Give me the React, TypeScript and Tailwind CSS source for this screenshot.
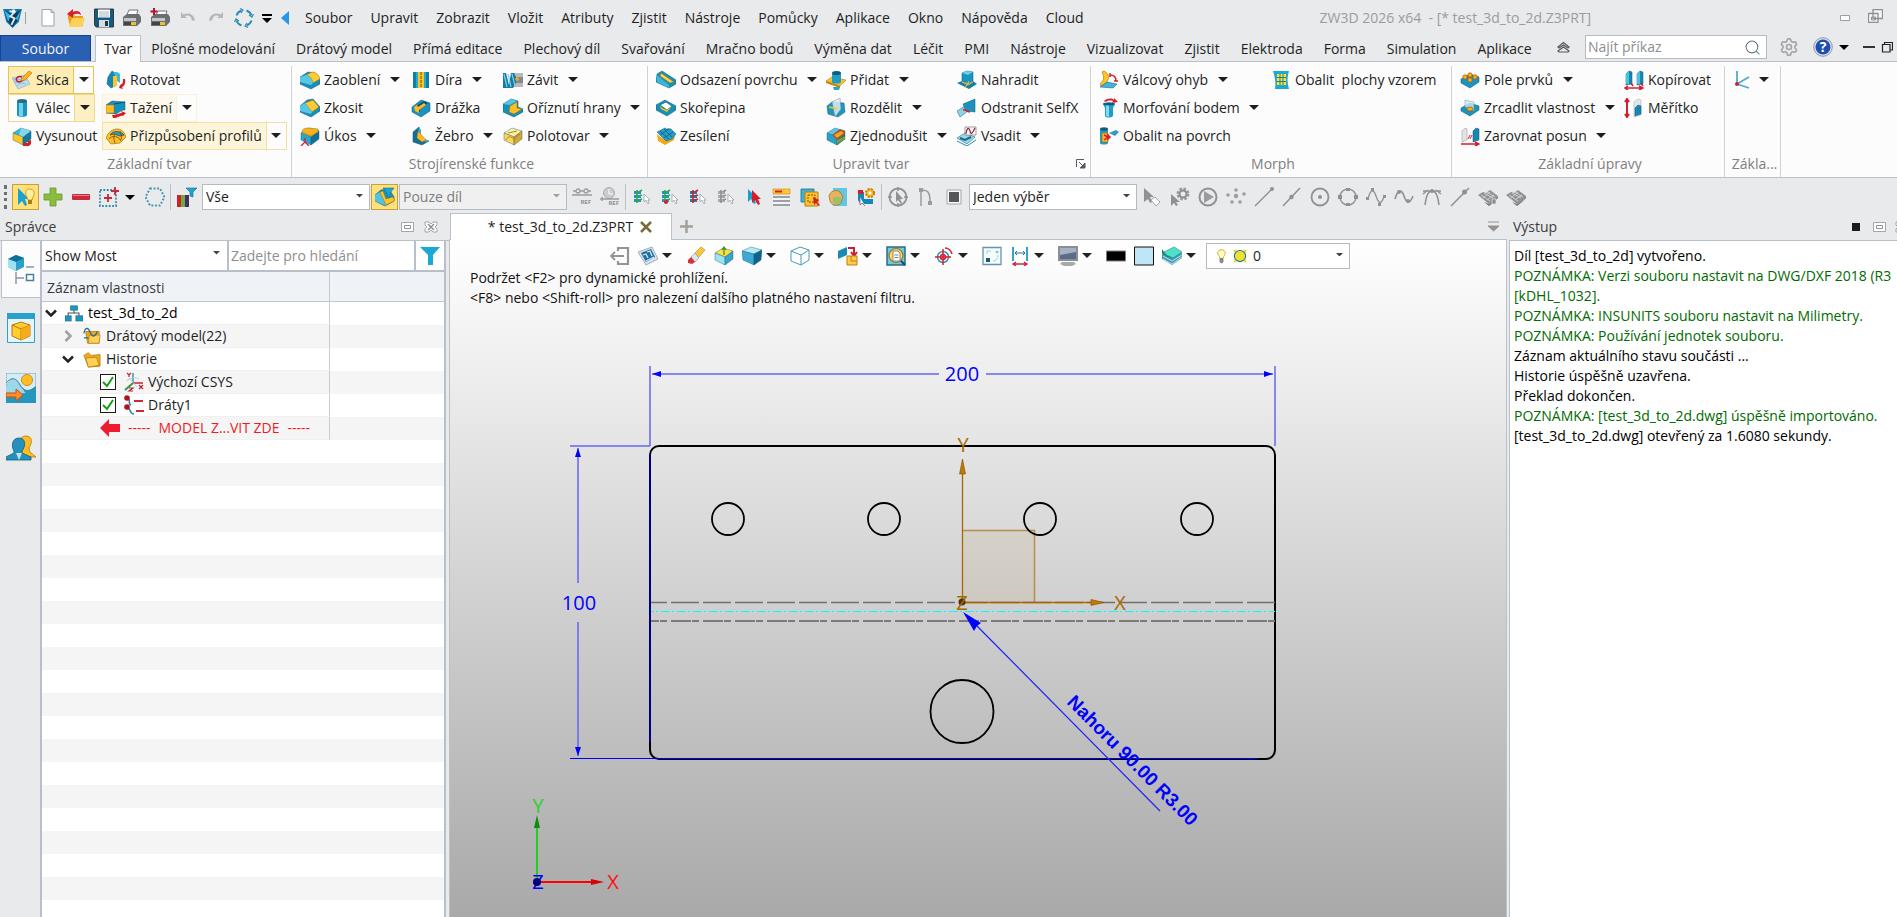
import React from "react";
import { Settings } from "lucide-react";

const Box = ({ t = "#7fdcf2", l = "#22a3cc", r = "#0b6488" }: { t?: string; l?: string; r?: string }) => (
  <g strokeLinejoin="round" stroke="#0a5a78" strokeWidth=".4">
    <path d="M1 7 9 2l10 3-8 6z" fill={t} />
    <path d="M1 7l10 4v8L1 14z" fill={l} />
    <path d="M11 11l8-6v8l-8 6z" fill={r} />
  </g>
);

const Surface = () => (
  <>
    <path d="M0 8l5-3 3 1 4-3 8 6-3 4-6 4z" fill="#8f9295" />
    <path d="M3 8l9 6M6 6l9 5M9 5l8 5M5 11l7-6M9 13l7-5" stroke="#d5d6d8" strokeWidth=".9" />
    <path d="M11 17l6-4 3-4v2l-4 4-5 4-5-4z" fill="#717477" />
  </>
);

const List4 = ({ c, d }: { c: string; d: string }) => (
  <>
    <path d="M2 4h7v3H2zM2 8h7v3H2zM2 12h7v3H2z" fill={c} />
    <path d="M5 3v13M7 5l3-2M7 9l3-1M7 13l3-1" stroke={d} strokeWidth="1.600" />
    <path d="M12 7v8l2-2 2 4 1-1-1-3h2z" fill="#fff" stroke="#8b98a6" strokeWidth=".7" />
  </>
);

const icons: Record<string, React.ReactNode> = {
  logo: (
    <>
      <path d="M1 1h18l-3 12-6 6-6-6z" fill="#1479a8" />
      <path d="M2 2l8 4 8-4-3 10-5 6-5-6z" fill="#0d3d5c" />
      <path d="M2 2l6 5-2 6zM18 2l-5 8 2 2z" fill="#35b9ec" />
      <path d="M7 3l5 1-4 4 4 2-3 6" fill="none" stroke="#dcebf2" strokeWidth="1.800" />
      <circle cx="11" cy="3" r="1.800" fill="#e9f1f5" />
    </>
  ),
  newFile: <path d="M4 1.500h9l3 3V18H4zM13 1.500v3h3" fill="#fff" stroke="#9aa2ad" />,
  open: (
    <>
      <path d="M2 10V6h5l2 2h8v10H4z" fill="#eb9d14" />
      <path d="M6 10h13l-3 9H3z" fill="#ffd257" />
      <path d="M15 7c0-4-5-5-8-3V1L1 6l6 4V7c3-2 6-1 8 0z" fill="#d6202b" />
    </>
  ),
  save: (
    <>
      <path d="M0.500 1h19v18H2l-1.500-2z" fill="#175a7e" stroke="#222" strokeWidth=".8" />
      <path d="M4 1.500h12v8H4z" fill="#fff" />
      <path d="M5 4h10M5 6h10M5 8h10" stroke="#8ca2af" strokeWidth=".8" />
      <path d="M5 12h10v7H5z" fill="#d7dde1" />
      <path d="M11 13h3v5h-3z" fill="#0f3b57" />
    </>
  ),
  print: (
    <>
      <path d="M7 2h9l-2 7H4z" fill="#fff" stroke="#777" />
      <path d="M1 9l4-3h12l2 3v5l-4 4H1z" fill="#6c6f72" />
      <path d="M2 10h12v3H2z" fill="#c3c6c8" />
      <path d="M2 14h12v3H2z" fill="#444" />
      <path d="M9 14h5v3H9z" fill="#e3c42c" />
    </>
  ),
  printPlus: (
    <>
      <path d="M8 3h9l-2 6H5z" fill="#fff" stroke="#777" />
      <path d="M1 9l4-3h13l2 3v5l-4 4H1z" fill="#6c6f72" />
      <path d="M2 10h13v3H2z" fill="#c3c6c8" />
      <path d="M2 14h13v3H2z" fill="#444" />
      <path d="M10 14h5v3h-5z" fill="#e3c42c" />
      <path d="M4 0v7M.5 3.500h7" stroke="#b3142c" strokeWidth="2" />
    </>
  ),
  undo: <path d="M3 4v6h6L7 8.500c3-2 6-1 7 4h3C16 6 10 4 5.500 6.500z" fill="#b4b6b9" />,
  redo: <path d="M17 4v6h-6l2-1.500c-3-2-6-1-7 4H3C4 6 10 4 14.500 6.500z" fill="#b4b6b9" />,
  sync: (
    <g fill="none" stroke="#2d8fb5" strokeWidth="2">
      <path d="M2.500 7.500a8 8 0 0 1 5-5M12.500 2.500a8 8 0 0 1 5 5M17.500 12.500a8 8 0 0 1-5 5M7.500 17.500a8 8 0 0 1-5-5" />
      <path d="M6 0.500l3 1.500-2 3M19.500 6l-1.500 3-3-2M14 19.500l-3-1.500 2-3M0.500 14l1.500-3 3 2" strokeWidth="1.200" />
    </g>
  ),
  sketch: (
    <>
      <path d="M0 8l13-3 5 9-12 5z" fill="#bddcec" stroke="#86a9bc" strokeWidth=".6" />
      <path d="M2 12l12 2M5 16l8-9M1 9l14 1" stroke="#7fb2ca" strokeWidth=".7" />
      <path d="M10 7c-4-2-7 2-5 4s6 0 7-3" fill="none" stroke="#c02030" strokeWidth="1.500" />
      <path d="M10 8l7-7 3 2-7 7-4 1z" fill="#ffb21e" stroke="#b96d00" strokeWidth=".6" />
    </>
  ),
  cylinder: (
    <>
      <path d="M5 3v14c0 2.500 10 2.500 10 0V3z" fill="#1a93bd" />
      <path d="M7 3v15c2 .6 3 .6 4 .5V3z" fill="#6fd3ec" />
      <ellipse cx="10" cy="3" rx="5" ry="2" fill="#2b6b85" />
    </>
  ),
  extrude: (
    <>
      <Box t="#35b8de" l="#ffc526" r="#117aa3" />
      <path d="M9 2l10 3-8 6-4-2z" fill="#d8f3fa" opacity=".5" />
      <path d="M11 17h5l-1-2 4-1v4l-2 2h-6z" fill="#d61e2b" />
    </>
  ),
  revolve: (
    <>
      <path d="M2 7l4-6 3 2v13l-4 2-4-4z" fill="#1488b2" stroke="#0a5a78" strokeWidth=".5" />
      <path d="M7 3c2-2 6-1 7 1v9l-3-2V7z" fill="#39bade" />
      <path d="M7 6h4v10l-4 1z" fill="#ffc526" />
      <path d="M14 15c3-1 3-3 3-6h2c1 4-1 8-3 8l1 2-4-1z" fill="#d61e2b" />
    </>
  ),
  sweep: (
    <>
      <path d="M0 7l6-4 13 1v8c-4 0-5 2-9 4L0 15z" fill="#1591bc" stroke="#0a5a78" strokeWidth=".5" />
      <path d="M0 7h8v8H0z" fill="#ffbe22" stroke="#a56a00" strokeWidth=".5" />
      <path d="M8 6l11-2" stroke="#084e6b" />
      <path d="M6 17c5 0 7-2 10-2l-1-2 5 2-3 3c-3-1-6 3-10 2z" fill="#d61e2b" />
    </>
  ),
  loft: (
    <>
      <path d="M0 12C2 6 7 3 11 3s7 2 9 8l-6 6-9 1z" fill="#ffbe22" stroke="#8c6410" strokeWidth=".6" />
      <path d="M4 9c4-6 12-3 14 0l-4 1-6-2z" fill="#3b98b5" stroke="#2a4753" strokeWidth=".7" />
      <path d="M3 13c3-4 10-3 12 2M9 8c-2 3-1 6 0 9M14 5c1 4 2 6 1 9" fill="none" stroke="#6d4e0b" strokeWidth=".8" />
    </>
  ),
  fillet: (
    <>
      <path d="M0 7l8-5 7 1 5 6v5l-9 5L0 14z" fill="#178fb9" stroke="#0a5a78" strokeWidth=".5" />
      <path d="M6 5l6-3c4 0 7 3 8 7l-7 4c-1-4-3-7-7-8z" fill="#ffc930" stroke="#9d6d05" strokeWidth=".5" />
      <path d="M0 7l6-2c4 1 6 4 7 8l-2 2L0 12z" fill="#57c7e6" />
    </>
  ),
  chamfer: (
    <>
      <path d="M0 8l7-6 6-1 7 8v4l-9 6L0 14z" fill="#178fb9" stroke="#0a5a78" strokeWidth=".5" />
      <path d="M5 5l8-3 6 7-7 5z" fill="#ffc930" stroke="#9d6d05" strokeWidth=".5" />
      <path d="M0 8l5-3 7 9-1 2-11-3z" fill="#57c7e6" />
    </>
  ),
  draft: (
    <>
      <Box t="#ffc930" l="#2aa7cf" r="#107099" />
      <path d="M2 6c0-3 3-4 7-4l9 1v3l-7 4z" fill="#f7b21d" stroke="#9d6d05" strokeWidth=".5" />
      <path d="M5 12v4l-4 4M5 16l4 4" stroke="#d61e2b" strokeWidth="1.300" fill="none" />
    </>
  ),
  hole: (
    <>
      <path d="M2 2h16v16H2z" fill="#24a9d0" />
      <path d="M2 2h3v16H2zM15 2h3v16h-3z" fill="#0f7fa8" />
      <path d="M7 2h6v16H7z" fill="#ffc526" />
      <path d="M10 2v16" stroke="#5b4c1a" strokeDasharray="3 1" />
    </>
  ),
  slot: (
    <>
      <path d="M1 9l9-7 9 3v8l-9 6-9-5z" fill="#1992bd" stroke="#0a5a78" strokeWidth=".5" />
      <path d="M4 9l9-6 4 2-8 6v3l-4-2z" fill="#0b4e69" />
      <path d="M3 9l3-2 1 2 6-4 2 2-7 5v3l-4-2z" fill="#ffb722" />
    </>
  ),
  rib: (
    <>
      <path d="M2 6l6-5v11l10 3-7 4L2 16z" fill="#146f94" stroke="#0a5a78" strokeWidth=".5" />
      <path d="M8 1l2 3v8l8 3-3 1-9-4z" fill="#34b2d8" />
      <path d="M7 5l8 9-4 2-5-4z" fill="#ffb722" stroke="#9d6d05" strokeWidth=".5" />
    </>
  ),
  thread: (
    <>
      <path d="M10 3h10v4H10zM10 13h10v4H10z" fill="#b7b9bb" />
      <path d="M10 7h10v6H10z" fill="#86898c" />
      <path d="M0 3h3l3 12 2-12h3l2 4v6l-3 5H0z" fill="#147aa4" />
      <path d="M1 4l3 13M5 4l3 13M9 4l3 12" stroke="#7bd2ee" strokeWidth="1.200" />
      <path d="M12 9h4M14 7v4" stroke="#f7a91b" strokeWidth="1.500" />
    </>
  ),
  lip: (
    <>
      <path d="M0 6l8-5 7 2v6l5 2v3l-9 5-11-5z" fill="#168fb9" stroke="#0a5a78" strokeWidth=".5" />
      <path d="M7 8l7-4v6l5 1-8 5-5-2z" fill="#ffbf24" stroke="#9d6d05" strokeWidth=".5" />
      <path d="M0 6l8-5 6 2-7 4z" fill="#53c6e6" />
    </>
  ),
  stock: (
    <>
      <Box t="#fff0a6" l="#fbd75b" r="#dba52c" />
      <path d="M3 14c2-5 5-3 8-1l6-5M5 7l9-2" stroke="#b1842a" fill="none" />
    </>
  ),
  offsetFace: (
    <>
      <path d="M1 4l5-3 14 9v4l-7 4L0 12z" fill="#178fb9" stroke="#0a5a78" strokeWidth=".5" />
      <path d="M5 3l13 9-4 1L4 6z" fill="#ffd248" stroke="#8c6410" strokeWidth=".5" />
      <path d="M1 5l12 10v3L1 12z" fill="#39b6db" />
    </>
  ),
  shell: (
    <>
      <path d="M0 7l9-5 11 6v4l-9 6L0 12z" fill="#178fb9" stroke="#0a5a78" strokeWidth=".5" />
      <path d="M4 7l6-3 6 4-5 4z" fill="#fff" stroke="#0a5a78" strokeWidth=".7" />
      <path d="M4 7l2 3 5 2 5-4-5 6-6-3z" fill="#ffbe22" />
    </>
  ),
  thicken: (
    <>
      <path d="M1 8l9 7 9-6-1 5-9 5-7-4z" fill="#f5a916" />
      <path d="M1 6l8-4c2 2 4 0 6 1l5 5-4 5-6 2z" fill="#249fc8" stroke="#0a5a78" strokeWidth=".5" />
      <path d="M4 5l9 8M8 3l8 8M4 9l9-6M8 12l9-6" stroke="#0c5c7c" strokeWidth=".8" />
    </>
  ),
  add: (
    <>
      <path d="M0 11l6-4 14 3-6 6z" fill="#ffbe22" stroke="#9d6d05" strokeWidth=".5" />
      <path d="M0 11l14 5v2L0 13z" fill="#c7820c" />
      <path d="M6 3v9c0 2 9 2 9 0V3z" fill="#1f9dc6" />
      <ellipse cx="10.500" cy="3" rx="4.500" ry="2" fill="#0d5c7b" />
      <path d="M7 17h7l-1 3H8z" fill="#2aa7cf" />
    </>
  ),
  divide: (
    <>
      <path d="M1 8l5-4 12 1 1 9-7 5-10-3z" fill="#1d96c0" stroke="#0a5a78" strokeWidth=".5" />
      <path d="M6 4l8-4 1 11-6 8z" fill="#d9eef5" stroke="#7b8d95" strokeWidth=".6" opacity=".85" />
      <path d="M3 9l8 2" stroke="#ffbe22" strokeWidth="1.500" />
    </>
  ),
  simplify: (
    <>
      <Box l="#27a3cb" t="#59c8e6" r="#0e6e94" />
      <path d="M6 9l8-6 5 2-1 4-7 5z" fill="#a9512d" />
      <path d="M8 9l7-4 3 2-7 5z" fill="#f5a51a" />
      <path d="M11 14l8-4v3l-8 5z" fill="#7b9c3b" />
    </>
  ),
  replace: (
    <>
      <path d="M5 3l5-2 6 1v9l-5 2-6-2z" fill="#1894be" stroke="#0a5a78" strokeWidth=".5" />
      <path d="M5 3l5-2 6 1-5 3z" fill="#69cfea" />
      <path d="M0 13l5-2 6 3 5-3 4 3-8 5z" fill="#197ea6" />
      <path d="M5 12l6 3 5-3M8 18l4-7" stroke="#ffbe22" fill="none" />
    </>
  ),
  selfx: (
    <>
      <path d="M0 13l8-5 3 5-8 6z" fill="#8fd3e6" stroke="#0a5a78" strokeWidth=".5" />
      <path d="M6 6l12-5v13l-9-1z" fill="#1b93bd" stroke="#0a5a78" strokeWidth=".5" />
      <path d="M6 12c3-1 3 2 7 2" stroke="#d61e2b" strokeWidth="1.500" fill="none" />
    </>
  ),
  emboss: (
    <>
      <path d="M0 12l8-5 10 4-8 7z" fill="#9cd6e8" stroke="#2a8bad" strokeWidth=".7" />
      <path d="M0 15l10 5 9-6" fill="none" stroke="#2a8bad" />
      <path d="M8 1h11v8H8z" fill="#fff" stroke="#777" strokeWidth=".7" />
      <path d="M9 8c1-7 3-7 4-3s2 3 5-3" stroke="#a01c33" strokeWidth="1.200" fill="none" />
      <path d="M3 12l5 2 6-3" stroke="#176a88" strokeWidth="2" fill="none" />
    </>
  ),
  bend: (
    <>
      <path d="M5 1c6 3 6 8 1 13l-4 2-1-2c5-5 4-7 2-12z" fill="#ffc526" stroke="#9d6d05" strokeWidth=".6" />
      <path d="M1 17l7-5 10 2-4 4z" fill="#3bb4d8" stroke="#0a5a78" strokeWidth=".5" />
      <path d="M11 5c4 0 6 2 6 6M11 3v4M15 11h4" stroke="#d61e2b" strokeWidth="1.500" fill="none" />
    </>
  ),
  morph: (
    <>
      <path d="M4 6c0-2 12-2 12 0l-2 4v8c-2 2-7 2-8 0v-8z" fill="#1f9dc6" />
      <path d="M7 7v11l3 1V7z" fill="#7fdcf2" />
      <ellipse cx="10" cy="6" rx="6" ry="1.500" fill="#0d5c7b" />
      <path d="M5 3c4-3 8-3 10-1V0l4 4-6 1 1-2c-3-1-6 0-8 1z" fill="#d61e2b" />
    </>
  ),
  wrap: (
    <>
      <path d="M1 3v14c0 2 8 2 8 0V3z" fill="#1f9dc6" />
      <ellipse cx="5" cy="3" rx="4" ry="1.800" fill="#0d5c7b" />
      <path d="M3 7h6v9H3z" fill="#ffbe22" stroke="#a55c06" strokeWidth=".6" />
      <path d="M5 9l4 2-4 3M8 8l3 3-3 3" stroke="#d61e2b" fill="none" strokeWidth="1.500" />
      <path d="M10 7l7-3 3 2-4 4z" fill="#2f9cc2" />
    </>
  ),
  wrapPattern: (
    <>
      <path d="M2 1h16c-2 6-2 12 0 18H4c1-6 0-12-2-18z" fill="#1fa8d2" />
      <path d="M6 4h9v11H6z" fill="#ffe13a" />
      <path d="M9 4v11M12 4v11M6 7.500h9M6 11.500h9" stroke="#1c7f8f" />
    </>
  ),
  pattern: (
    <>
      <path d="M1 9l9-5 9 3v5l-9 6-9-5z" fill="#1a93be" stroke="#0a5a78" strokeWidth=".5" />
      <g fill="#ffae1a" stroke="#a85106" strokeWidth=".7">
        <circle cx="5" cy="7" r="2.200" />
        <circle cx="10" cy="5" r="2.200" />
        <circle cx="15" cy="7" r="2.200" />
        <circle cx="10" cy="10" r="2.200" />
      </g>
    </>
  ),
  mirror: (
    <>
      <path d="M1 10l9-5 9 3v4l-9 6-9-5z" fill="#1a93be" stroke="#0a5a78" strokeWidth=".5" />
      <path d="M5 2l9 2v9l-9-4z" fill="#cfe9f2" stroke="#6f97a7" strokeWidth=".6" opacity=".8" />
      <ellipse cx="10" cy="11" rx="3" ry="2" fill="#ffae1a" stroke="#a85106" strokeWidth=".7" />
    </>
  ),
  align: (
    <>
      <path d="M2 5l3-3 2 1v11l-5 2z" fill="#e2e4e6" stroke="#9a9da0" strokeWidth=".6" />
      <path d="M13 5l3-3 3 1v11l-6 2z" fill="#1688b1" stroke="#0a5a78" strokeWidth=".5" />
      <path d="M8 13l2-4M10 13l2-4" stroke="#d61e2b" />
      <path d="M1 18h17M15 16l4 2-4 2" stroke="#d61e2b" strokeWidth="1.500" fill="none" />
    </>
  ),
  copy: (
    <>
      <path d="M2 4l3-3 3 1v12l-6 1zM13 4l3-3 3 1v12l-6 1z" fill="#1688b1" stroke="#0a5a78" strokeWidth=".5" />
      <path d="M2 4l3-3v13H2zM13 4l3-3v13h-3z" fill="#4ac0e2" />
      <path d="M7 13l2 3M17 13l2 3M1 18h17M15 16l4 2-4 2M4 16l-3 2 3 2" stroke="#d61e2b" strokeWidth="1.500" fill="none" />
    </>
  ),
  scale: (
    <>
      <path d="M3 1v18M1 4l2-3 2 3M1 16l2 3 2-3" stroke="#d61e2b" strokeWidth="2" fill="none" />
      <path d="M10 4l4-3 3 1v15l-7 2z" fill="#e2e4e6" stroke="#b2b5b8" strokeWidth=".6" />
      <path d="M11 10l3-3 3 1v8l-6 2z" fill="#1688b1" stroke="#0a5a78" strokeWidth=".5" />
    </>
  ),
  datum: (
    <>
      <path d="M4 14V1M4 14l12-7M4 14l12 4" stroke="#55a9c9" strokeWidth="1.800" />
      <circle cx="4" cy="14" r="2" fill="#d61e2b" />
    </>
  ),
  pick: (
    <>
      <path d="M2 1v17l4-4 3 5 2-1-2-6h4z" fill="#19a3d3" />
      <path d="M13 2c6 0 6 5 4 8l-1 3h-4l-1-3c-2-3-2-8 2-8z" fill="#fff0a0" stroke="#d99d12" />
      <path d="M12 13h4v4h-4z" fill="#b07b12" />
    </>
  ),
  plus: <path d="M7 1h6v6h6v6h-6v6H7v-6H1V7h6z" fill="#8bbd3c" stroke="#69952b" strokeWidth=".8" />,
  minus: (
    <>
      <rect x="1" y="7" width="18" height="6" rx="1" fill="#c8293d" />
      <path d="M2 8.500h16" stroke="#e8808d" />
    </>
  ),
  boxPlus: (
    <>
      <rect x="1" y="3" width="16" height="16" fill="none" stroke="#2a8aa8" strokeWidth="1.800" strokeDasharray="1.800 1.600" />
      <path d="M9 7v8M5 11h8M16 0v8M12 4h8" stroke="#c8293d" strokeWidth="1.800" />
    </>
  ),
  hexagon: <path d="M5 1.500h10l4.500 8.500-4.500 8.500H5L.5 10z" fill="none" stroke="#3a93b0" strokeWidth="2" strokeDasharray="1.800 1.800" />,
  colorFilter: (
    <>
      <path d="M0 8h4v12H0z" fill="#d5202b" />
      <path d="M4 8h4v12H4z" fill="#63b33b" />
      <path d="M8 8h4v12H8z" fill="#4a2d66" />
      <path d="M9 1h11l-4 4v5l-3-1V5z" fill="#1ba5d0" stroke="#0e6e90" strokeWidth=".6" />
    </>
  ),
  partFilter: (
    <>
      <path d="M0 8l6-5 8-1 5 8v4l-9 5-10-5z" fill="#1a94be" stroke="#0a5a78" strokeWidth=".6" />
      <path d="M0 8l5-3 6 9v5L0 14z" fill="#52c3e3" />
      <path d="M5 5l3-1 3 8 6-2 2 1v3l-8 4z" fill="#ffc526" stroke="#9d6d05" strokeWidth=".5" />
      <path d="M8 1h11l-4 5v5l-3-2V6z" fill="#1ba5d0" stroke="#0e6e90" strokeWidth=".6" />
    </>
  ),
  linkRef: (
    <>
      <path d="M1 4h3M8 4h4M16 4h3M0 8h20" stroke="#9a9c9f" strokeWidth="1.300" />
      <g fill="none" stroke="#9a9c9f" strokeWidth="1.300">
        <circle cx="6" cy="4" r="2" />
        <circle cx="14" cy="4" r="2" />
      </g>
      <text x="19" y="17" fontSize="6" fontWeight="700" textAnchor="end" fill="#8d8f92">REF</text>
    </>
  ),
  globeRef: (
    <>
      <circle cx="9" cy="6" r="5.500" fill="#c9cbcd" stroke="#aaacae" />
      <path d="M9 2v5h4" stroke="#fff" fill="none" />
      <path d="M0 12h19M2 10v4" stroke="#9a9c9f" strokeWidth="1.500" />
      <text x="19" y="18" fontSize="6" fontWeight="700" textAnchor="end" fill="#8d8f92">REF</text>
    </>
  ),
  list1: <List4 c="#2295bd" d="#3ba351" />,
  list2: (
    <>
      <List4 c="#2295bd" d="#3ba351" />
      <circle cx="6" cy="15" r="2" fill="#d61e2b" />
    </>
  ),
  list3: <List4 c="#2d7a9b" d="#c32439" />,
  list4: <List4 c="#aaacae" d="#8e9092" />,
  arrows: (
    <>
      <path d="M4 2v13l3-3 3 5 2-1-2-5h3z" fill="#17a0cd" />
      <path d="M8 3v13l3-3 3 5 2-1-2-5h3z" fill="#d61e2b" />
    </>
  ),
  rows: (
    <>
      <path d="M1 2h17v5H1z" fill="#ffc73a" stroke="#cf941b" strokeWidth=".7" />
      <path d="M3 4.500h7" stroke="#d61e2b" strokeWidth="2" />
      <path d="M1 10h17M1 14h17M1 18h17" stroke="#9ba1a7" strokeWidth="1.800" />
      <path d="M1 12h17M1 16h17" stroke="#fff" />
    </>
  ),
  windows: (
    <>
      <path d="M1 2h13v13H1z" fill="#3fb2d6" stroke="#15708f" strokeWidth=".8" />
      <path d="M5 5h13v14H5z" fill="#ffc42e" stroke="#b77d08" />
      <path d="M8 8h7v7H8z" fill="none" stroke="#7c5304" strokeDasharray="2 1" />
      <path d="M13 10l1 8 2-2 3 3 1-1-3-3 2-2z" fill="#d61e2b" />
    </>
  ),
  hand: (
    <>
      <path d="M5 1h14v18H5z" fill="#64c6e2" />
      <path d="M1 9c1-5 7-7 11-4l3 5-2 6c-4 4-10 2-11-2z" fill="#eab35b" stroke="#9b6b24" strokeWidth=".7" />
      <path d="M5 10h8v5c-2 3-6 3-8 0z" fill="#9ac26c" />
    </>
  ),
  magnet: (
    <>
      <path d="M2 5v7c0 3 3 5 6 5h9v-5H8V5z" fill="#1487b2" />
      <path d="M2 3h5v4H2z" fill="#d61e2b" />
      <circle cx="14" cy="6" r="4" fill="#ffbd24" stroke="#bd7d08" strokeDasharray="2 1.200" strokeWidth="2" />
      <circle cx="14" cy="6" r="1.500" fill="#fff" />
      <path d="M4 10v8l2-2 3 3" fill="#fff" stroke="#667" strokeWidth=".8" />
    </>
  ),
  circleCursor: (
    <>
      <circle cx="10" cy="10" r="8.500" fill="none" stroke="#8f9193" strokeWidth="1.800" />
      <path d="M10 0v4M10 16v4M0 10h4M16 10h4" stroke="#8f9193" strokeWidth="1.500" />
      <path d="M8 4v11l2-2 3 4 1-1-2-4h3z" fill="#8f9193" />
    </>
  ),
  path: (
    <>
      <path d="M5 19V3c7 0 9 2 9 12" fill="none" stroke="#9a9c9f" strokeWidth="1.500" />
      <path d="M3 1h4v4H3zM12 14h4v4h-4z" fill="#9a9c9f" />
    </>
  ),
  square: (
    <>
      <path d="M3 3h14v14H3z" fill="#fafafa" stroke="#a3a5a8" />
      <path d="M5 5h10v10H5z" fill="#555759" />
    </>
  ),
  cursorErase: (
    <>
      <path d="M2 1v14l4-3 2 4 2-1-2-5h4z" fill="#8f9193" />
      <path d="M9 13l4-3 5 5-4 4z" fill="#fff" stroke="#a3a5a8" />
    </>
  ),
  cursorGear: (
    <>
      <circle cx="13" cy="7" r="5" fill="none" stroke="#9a9c9f" strokeWidth="3" strokeDasharray="2.500 1.400" />
      <circle cx="13" cy="7" r="3.500" fill="none" stroke="#8a8c8f" strokeWidth="2" />
      <path d="M1 7v12l3-3 2 3 2-1-2-3h4z" fill="#8f9193" />
    </>
  ),
  play: (
    <>
      <circle cx="10" cy="10" r="8.500" fill="none" stroke="#8f9193" strokeWidth="2" />
      <path d="M6 4l10 6-10 6z" fill="#9a9c9f" />
    </>
  ),
  dots: (
    <g fill="#9a9c9f">
      <circle cx="10" cy="3" r="1.800" />
      <circle cx="2" cy="8" r="1.800" />
      <circle cx="18" cy="7" r="1.800" />
      <circle cx="10" cy="9" r="2.200" />
      <circle cx="6" cy="15" r="1.800" />
      <circle cx="14" cy="15" r="1.800" />
    </g>
  ),
  lineEnd: (
    <>
      <path d="M1 19L18 2" stroke="#8f9193" strokeWidth="1.500" />
      <circle cx="18" cy="2" r="2" fill="#8f9193" />
    </>
  ),
  lineMid: (
    <>
      <path d="M1 19L18 1" stroke="#8f9193" strokeWidth="1.500" />
      <circle cx="9.500" cy="10" r="2.200" fill="#8f9193" />
    </>
  ),
  circleCenter: (
    <>
      <circle cx="10" cy="10" r="8.500" fill="none" stroke="#8f9193" strokeWidth="1.800" />
      <circle cx="10" cy="10" r="2" fill="#8f9193" />
    </>
  ),
  circleQuad: (
    <>
      <circle cx="10" cy="10" r="8" fill="none" stroke="#8f9193" strokeWidth="1.500" />
      <path d="M8 1h4v3H8zM8 16h4v3H8zM0 8h4v4H0zM16 8h4v4h-4z" fill="#8f9193" />
    </>
  ),
  wavePoints: (
    <>
      <path d="M2 12C5 0 8 3 10 9s5 11 8 0" stroke="#8f9193" strokeWidth="1.300" fill="none" />
      <path d="M5 1h3v3H5zM12 16h3v3h-3zM0 10h3v3H0zM17 8h3v3h-3z" fill="#8f9193" />
    </>
  ),
  wave: (
    <>
      <path d="M1 12C4 1 8 3 10 9s5 10 9 0" stroke="#8f9193" strokeWidth="1.600" fill="none" />
      <circle cx="5" cy="5" r="2" fill="#8f9193" />
      <circle cx="14" cy="14" r="2" fill="#8f9193" />
    </>
  ),
  tangent: (
    <>
      <path d="M1 4h18M3 18C4 9 6 4 10 4s6 5 7 14M1 7l5-4M19 7l-5-4" stroke="#8f9193" strokeWidth="1.500" fill="none" />
      <circle cx="10" cy="4" r="2" fill="#8f9193" />
    </>
  ),
  lineNear: (
    <>
      <path d="M1 19L19 1" stroke="#8f9193" strokeWidth="1.600" />
      <circle cx="14.500" cy="5" r="2.500" fill="#8f9193" />
    </>
  ),
  surf1: (
    <>
      <Surface />
      <path d="M14 12h4v5h-4z" fill="#8a8d90" stroke="#e8eaec" strokeWidth=".7" />
    </>
  ),
  surf2: <Surface />,
  exit: (
    <>
      <path d="M8 5V2h10v16H8v-3" fill="none" stroke="#929497" strokeWidth="2.200" />
      <path d="M14 10H1M5 6l-4 4 4 4" fill="none" stroke="#929497" strokeWidth="1.800" />
    </>
  ),
  iview: (
    <>
      <path d="M0 6l14-5 6 12-12 6z" fill="#d7e2ec" stroke="#8294a4" strokeWidth=".7" />
      <path d="M3 7l10-4 4 8-9 5z" fill="#1e6e9f" />
      <path d="M5 9l3-1 2 4M9 6l3-1 2 5M8 15l8-4" stroke="#cfe9f6" strokeWidth="1.300" fill="none" />
    </>
  ),
  eraser: (
    <>
      <path d="M9 7l6-6 4 3-7 8z" fill="#f6c93b" stroke="#b1841d" strokeWidth=".6" />
      <path d="M5 11l4-4 4 5-4 4z" fill="#dfe6eb" stroke="#8b9298" strokeWidth=".6" />
      <path d="M2 14l3-3 4 5-3 2-4-1z" fill="#d5323f" />
    </>
  ),
  cubeYellow: (
    <>
      <Box t="#ffe042" l="#9fe3f2" r="#37a6c6" />
      <path d="M10 9V1M8 4l2-3 2 3" stroke="#3c8c28" fill="none" strokeWidth="1.200" />
    </>
  ),
  cubeBlue: (
    <g stroke="#0a5a78" strokeWidth=".4" strokeLinejoin="round">
      <path d="M0 5l9-4 11 3-8 4z" fill="#b8e9f6" />
      <path d="M0 5l12 3v11L1 14z" fill="#3ba9d4" />
      <path d="M12 8l8-4-1 10-7 5z" fill="#0d6389" />
    </g>
  ),
  cubeWire: <path d="M1 5l9-4 9 3v10l-8 5-10-4zM1 5l10 4 8-5M11 9v10" fill="#fff" stroke="#4a9cb5" strokeLinejoin="round" />,
  move: (
    <>
      <path d="M0 5l9-4v8l-9 4z" fill="#198bb3" />
      <path d="M10 2h6v7M13 6l3 4 3-4" fill="none" stroke="#c61f36" strokeWidth="2" />
      <path d="M9 10h10v9H9z" fill="#ffc94b" stroke="#bd820f" />
      <path d="M13 10v5h6" fill="none" stroke="#bd820f" />
    </>
  ),
  zoomFit: (
    <>
      <path d="M1 1h18v18H1z" fill="#79c7dd" stroke="#276d86" strokeWidth="1.500" />
      <circle cx="10" cy="9.500" r="7" fill="#ffd65a" stroke="#8a7740" strokeWidth="1.200" />
      <path d="M7 5h5l2 2v8H7z" fill="#fff" stroke="#66737a" strokeWidth=".8" />
      <path d="M8.500 9h4M8.500 11.500h4" stroke="#66737a" strokeWidth=".9" />
      <path d="M15 15l4 4" stroke="#0d4e6b" strokeWidth="2" />
    </>
  ),
  target: (
    <>
      <circle cx="9" cy="11" r="5.500" fill="none" stroke="#3a8eae" strokeWidth="1.500" />
      <path d="M9 3v16M1 11h16M6 11h6" stroke="#cc2431" strokeWidth="1.500" />
      <circle cx="9" cy="11" r="2.500" fill="none" stroke="#cc2431" strokeWidth="1.500" />
      <path d="M11 2c4 0 6 3 7 6" fill="none" stroke="#cc2431" strokeWidth="1.500" />
    </>
  ),
  frame: (
    <>
      <path d="M1 1.500h18v17H1z" fill="#f6fbfd" stroke="#6695a8" strokeWidth="1.300" />
      <path d="M5 8V5h4M16 9c0 4-2 6-5 6" fill="none" stroke="#9fd3e4" />
      <path d="M4 12h4v4H4z" fill="#175b7c" />
      <path d="M13 5h4l-2 3z" fill="#7cc4da" />
    </>
  ),
  dimension: (
    <>
      <path d="M3 1v14M17 1v14" stroke="#35a1c4" strokeWidth="2" />
      <path d="M5 7h10M7 5L5 7l2 2M13 5l2 2-2 2" stroke="#1f7797" fill="none" />
      <path d="M4 18h12M6 16l-3 2 3 2M14 16l3 2-3 2" stroke="#c8293d" fill="none" strokeWidth="1.400" />
    </>
  ),
  monitor: (
    <>
      <path d="M0 0h20v15H0z" fill="#8b8e92" />
      <path d="M2 2h16v11H2z" fill="#5c6b8a" />
      <path d="M2 2h16v4L2 9z" fill="#a6b1c6" />
      <path d="M4 16h12l2 2-4 2H6l-4-2z" fill="#a8aaad" />
    </>
  ),
  black: <path d="M.5 5h19v10H.5z" fill="#000" stroke="#808080" />,
  lightBlue: <path d="M.5 1h19v18H.5z" fill="#bfe6f5" stroke="#1a0d0d" />,
  layers: (
    <>
      <path d="M0 13l10 6 10-7V7L0 8z" fill="#4596b0" />
      <path d="M1 10l9 5 10-6M1 13l9 5 10-7" stroke="#c2eef4" strokeWidth=".9" fill="none" />
      <path d="M0 7l12-6 8 5-9 6z" fill="#4ee0c8" stroke="#1d8a86" strokeWidth=".6" />
      <path d="M0 3l5 7 6 2-6-1L0 7z" fill="#1a7f6d" />
    </>
  ),
  bulb: (
    <>
      <path d="M10 1c6 0 6 6 3 9l-1 3H8l-1-3C4 7 4 1 10 1z" fill="#fffac0" stroke="#c2b52a" strokeWidth="1.300" />
      <path d="M8 13h4v4l-2 2-2-2z" fill="#8a92a8" stroke="#4e566c" strokeWidth=".8" />
    </>
  ),
  sun: (
    <>
      <path d="M1 1h5L1 6zM19 1v5l-5-5zM1 19v-5l5 5zM19 19h-5l5-5z" fill="#e8da29" />
      <circle cx="10" cy="10" r="8" fill="#f2e22f" stroke="#216f93" strokeWidth="1.500" />
    </>
  ),
  tree: (
    <>
      <path d="M6 2h8v5H6zM0 13h7v6H0zM12 13h8v6h-8z" fill="#1d95be" stroke="#0f6887" strokeWidth=".6" />
      <path d="M10 7v3M3.500 13v-3h12v3" stroke="#4a4e53" fill="none" strokeWidth="1.200" />
    </>
  ),
  wireFolder: (
    <>
      <path d="M3 5h15v13H5z" fill="#f2a91d" stroke="#9d6d05" strokeWidth=".7" />
      <path d="M7 9h12l-1 9H6z" fill="#ffd257" stroke="#9d6d05" strokeWidth=".6" />
      <path d="M1 7C3-1 6 1 8 6s5 6 8-1M1 12h5" fill="none" stroke="#236e8d" strokeWidth="1.400" />
    </>
  ),
  folder: (
    <>
      <path d="M1 6l5-3 3 3 10-1v13l-13 1z" fill="#f2a91d" stroke="#b87509" strokeWidth=".8" />
      <path d="M3 9l12-1 3 9-12 2z" fill="#ffd257" stroke="#b87509" strokeWidth=".8" />
    </>
  ),
  csys: (
    <>
      <path d="M9 11V1" stroke="#3195b8" strokeWidth="1.500" />
      <path d="M9 11h10" stroke="#bd2434" strokeWidth="1.500" />
      <path d="M9 11l-8 7" stroke="#2f9a45" strokeWidth="2" />
      <path d="M3 1l2 2 2-2M5 3v2M15 13l4 4m0-4l-4 4M5 16h4l-4 3h4" stroke="#bd2434" strokeWidth="1.200" fill="none" />
      <path d="M2 9c4-3 9-4 13-2M5 6l8 9" stroke="#c4c9cc" fill="none" />
    </>
  ),
  wires: (
    <>
      <path d="M3 4c5 0 0 5 4 6M3 14c4-2 2 5 7 5" fill="none" stroke="#2c7f9e" strokeWidth="1.500" />
      <circle cx="3" cy="3" r="2.800" fill="#b3121d" />
      <circle cx="3" cy="12" r="2.800" fill="#b3121d" />
      <path d="M10 6h9M12 16h8" stroke="#c8293d" strokeWidth="2" />
    </>
  ),
  leftArrow: <path d="M0 10l9-9v5h11v8H9v5z" fill="#ed1c2e" />,
};

const Icon = ({ name, className = "size-5" }: { name: string; className?: string }) => (
  <svg viewBox="0 0 20 20" className={`${className} shrink-0`} aria-hidden="true">
    {icons[name]}
  </svg>
);

const Caret = ({ className = "w-[10px]" }: { className?: string }) => (
  <svg viewBox="0 0 10 5" className={`${className} shrink-0`} aria-hidden="true">
    <path d="M0 0h10L5 5z" fill="currentColor" />
  </svg>
);

const quickAccess = ["newFile", "open", "save", "print", "printPlus", "undo", "redo", "sync"];

const menus = [
  "Soubor", "Upravit", "Zobrazit", "Vložit", "Atributy", "Zjistit",
  "Nástroje", "Pomůcky", "Aplikace", "Okno", "Nápověda", "Cloud",
];

const tabs = [
  "Plošné modelování", "Drátový model", "Přímá editace", "Plechový díl", "Svařování",
  "Mračno bodů", "Výměna dat", "Léčit", "PMI", "Nástroje", "Vizualizovat", "Zjistit",
  "Elektroda", "Forma", "Simulation", "Aplikace",
];

interface RibbonItem {
  icon: string;
  text: string;
  menu?: boolean;
  box?: string;
  main?: string;
  arrow?: string;
}

interface RibbonGroup {
  label: string;
  width: string;
  launcher?: boolean;
  columns: { width: string; items: RibbonItem[] }[];
}

const groups: RibbonGroup[] = [
  {
    label: "Základní tvar",
    width: "w-[292px] pl-2",
    columns: [
      {
        width: "w-[94px]",
        items: [
          { icon: "sketch", text: "Skica", menu: true, box: "border-[#e8c44f]", main: "bg-[#fdedb5]", arrow: "border-[#e8c44f]" },
          { icon: "cylinder", text: "Válec", menu: true, box: "border-[#f0d98a]", arrow: "border-[#f0d98a] bg-[#fcefc4]" },
          { icon: "extrude", text: "Vysunout" },
        ],
      },
      {
        width: "w-[190px]",
        items: [
          { icon: "revolve", text: "Rotovat" },
          { icon: "sweep", text: "Tažení", menu: true, box: "border-[#fbf2d6]", main: "bg-[#fef9ec]", arrow: "border-[#fbf2d6]" },
          { icon: "loft", text: "Přizpůsobení profilů", menu: true, box: "border-[#f3e0a0]", main: "bg-[#fdf5d9]", arrow: "border-[#f3e0a0]" },
        ],
      },
    ],
  },
  {
    label: "Strojírenské funkce",
    width: "w-[356px] pl-1",
    columns: [
      {
        width: "w-[111px]",
        items: [
          { icon: "fillet", text: "Zaoblení", menu: true },
          { icon: "chamfer", text: "Zkosit" },
          { icon: "draft", text: "Úkos", menu: true },
        ],
      },
      {
        width: "w-[92px]",
        items: [
          { icon: "hole", text: "Díra", menu: true },
          { icon: "slot", text: "Drážka" },
          { icon: "rib", text: "Žebro", menu: true },
        ],
      },
      {
        width: "w-[149px]",
        items: [
          { icon: "thread", text: "Závit", menu: true },
          { icon: "lip", text: "Oříznutí hrany", menu: true },
          { icon: "stock", text: "Polotovar", menu: true },
        ],
      },
    ],
  },
  {
    label: "Upravit tvar",
    width: "w-[443px] pl-1",
    launcher: true,
    columns: [
      {
        width: "w-[170px]",
        items: [
          { icon: "offsetFace", text: "Odsazení povrchu", menu: true },
          { icon: "shell", text: "Skořepina" },
          { icon: "thicken", text: "Zesílení" },
        ],
      },
      {
        width: "w-[131px]",
        items: [
          { icon: "add", text: "Přidat", menu: true },
          { icon: "divide", text: "Rozdělit", menu: true },
          { icon: "simplify", text: "Zjednodušit", menu: true },
        ],
      },
      {
        width: "w-[138px]",
        items: [
          { icon: "replace", text: "Nahradit" },
          { icon: "selfx", text: "Odstranit SelfX" },
          { icon: "emboss", text: "Vsadit", menu: true },
        ],
      },
    ],
  },
  {
    label: "Morph",
    width: "w-[361px] pl-1",
    columns: [
      {
        width: "w-[172px]",
        items: [
          { icon: "bend", text: "Válcový ohyb", menu: true },
          { icon: "morph", text: "Morfování bodem", menu: true },
          { icon: "wrap", text: "Obalit na povrch" },
        ],
      },
      { width: "w-[185px]", items: [{ icon: "wrapPattern", text: "Obalit  plochy vzorem" }] },
    ],
  },
  {
    label: "Základní úpravy",
    width: "w-[273px] pl-1",
    columns: [
      {
        width: "w-[164px]",
        items: [
          { icon: "pattern", text: "Pole prvků", menu: true },
          { icon: "mirror", text: "Zrcadlit vlastnost", menu: true },
          { icon: "align", text: "Zarovnat posun", menu: true },
        ],
      },
      {
        width: "w-[105px]",
        items: [
          { icon: "copy", text: "Kopírovat" },
          { icon: "scale", text: "Měřítko" },
        ],
      },
    ],
  },
  {
    label: "Zákla...",
    width: "w-[56px] pl-1",
    columns: [{ width: "w-[52px]", items: [{ icon: "datum", text: "", menu: true }] }],
  },
];

const filterIcons = ["list1", "list2", "list3", "list4", "arrows", "rows", "windows", "hand", "magnet"];

const snapIcons = [
  "cursorErase", "cursorGear", "play", "dots", "lineEnd", "lineMid", "circleCenter",
  "circleQuad", "wavePoints", "wave", "tangent", "lineNear", "surf1", "surf2",
];

const viewTools: [string, boolean][] = [
  ["exit", false], ["iview", true], ["eraser", false], ["cubeYellow", false], ["cubeBlue", true],
  ["cubeWire", true], ["move", true], ["zoomFit", true], ["target", true], ["frame", false],
  ["dimension", true], ["monitor", true], ["black", false], ["lightBlue", false], ["layers", true],
];

const output = [
  { text: "Díl [test_3d_to_2d] vytvořeno." },
  { text: "POZNÁMKA: Verzi souboru nastavit na DWG/DXF 2018 (R3", note: true },
  { text: "[kDHL_1032].", note: true },
  { text: "POZNÁMKA: INSUNITS souboru nastavit na Milimetry.", note: true },
  { text: "POZNÁMKA: Používání jednotek souboru.", note: true },
  { text: "Záznam aktuálního stavu součásti ..." },
  { text: "Historie úspěšně uzavřena." },
  { text: "Překlad dokončen." },
  { text: "POZNÁMKA: [test_3d_to_2d.dwg] úspěšně importováno.", note: true },
  { text: "[test_3d_to_2d.dwg] otevřený za 1.6080 sekundy." },
];

const IconButton = ({ name, className = "w-7" }: { name: string; className?: string }) => (
  <button aria-label={name} className={`flex h-[26px] shrink-0 items-center justify-center ${className}`}>
    <Icon name={name} />
  </button>
);

const Combo = ({ label, value, className, disabled }: { label: string; value: string; className: string; disabled?: boolean }) => (
  <div className={`relative shrink-0 ${className}`}>
    <select
      aria-label={label}
      disabled={disabled}
      className={`h-full w-full appearance-none border border-[#b6bbc3] pl-[3px] ${
        disabled ? "bg-[#f0f0f0] text-[#7d7d7d]" : "bg-white text-[#1e1e1e]"
      }`}
    >
      <option>{value}</option>
    </select>
    <Caret className={`pointer-events-none absolute right-[7px] top-[10px] w-[7px] ${disabled ? "text-[#a0a0a0]" : "text-[#444]"}`} />
  </div>
);

const Separator = () => <div className="ml-px mr-0.5 h-[26px] w-px shrink-0 bg-[#bcc1c8]" />;

const PinIcon = () => (
  <svg viewBox="0 0 13 10" className="w-[13px]" aria-hidden="true">
    <path d="M.5.5h12v9H.5z" fill="#fff" stroke="#a3a6aa" />
    <path d="M3.500 3.500h6v3h-6z" fill="none" stroke="#8d9094" />
  </svg>
);

const CloseIcon = () => (
  <svg viewBox="0 0 14 12" className="w-[14px]" aria-hidden="true">
    <path d="M1 1h4l2 2 2-2h4v3L11 6l2 2v3H9L7 9l-2 2H1V8l2-2-2-2z" fill="#fff" stroke="#a3a6aa" />
    <path d="M4 3l6 6M10 3L4 9" stroke="#8d9094" strokeWidth="1.500" />
  </svg>
);

const RestoreIcon = () => (
  <svg viewBox="0 0 12 12" className="w-3" aria-hidden="true">
    <path d="M3.500 3V1.500h8V9H9M1.500 3.500H9V11H1.500z" fill="none" stroke="#222" strokeWidth="1.200" />
  </svg>
);

const TitleBar = () => (
  <header className="flex h-[35px] shrink-0 items-center pt-px">
    <Icon name="logo" className="ml-0.5 size-[21px]" />
    <div className="ml-0.5 mr-2 h-3 w-px bg-[#9b9fa4]" />
    {quickAccess.map((name) => (
      <IconButton key={name} name={name} />
    ))}
    <button aria-label="Přizpůsobit" className="flex w-[18px] flex-col items-center gap-0.5 text-black">
      <span className="h-0.5 w-[10px] bg-black" />
      <Caret />
    </button>
    <button aria-label="Sbalit" className="flex w-[18px] justify-center">
      <svg viewBox="0 0 8 14" className="w-2" aria-hidden="true">
        <path d="M8 0v14L0 7z" fill="#2795e9" />
      </svg>
    </button>
    <nav className="ml-[3px] flex gap-0.5">
      {menus.map((menu) => (
        <button key={menu} className="px-2">
          {menu}
        </button>
      ))}
    </nav>
    <h1 className="flex-1 whitespace-pre pr-3 text-center text-[#9c9c9c]">ZW3D 2026 x64  - [* test_3d_to_2d.Z3PRT]</h1>
    <div className="flex w-[66px] items-center gap-[18px] pl-[9px]">
      <button aria-label="Minimalizovat">
        <svg viewBox="0 0 10 6" className="w-[10px]" aria-hidden="true">
          <path d="M.5.5h9v5h-9z" fill="#fff" stroke="#9b9ea2" />
        </svg>
      </button>
      <button aria-label="Obnovit" className="pb-1">
        <svg viewBox="0 0 15 14" className="w-[15px]" aria-hidden="true">
          <path d="M5 .5h9.500v9H5zM.5 4.500H10v9H.5z" fill="#f5f5f6" stroke="#8d9094" strokeWidth="1.300" />
          <path d="M3.500 8h4v3h-4z" fill="none" stroke="#8d9094" />
        </svg>
      </button>
    </div>
  </header>
);

const TabBar = () => (
  <div className="flex h-[26px] shrink-0">
    <button className="-mb-px h-[27px] w-[91px] border border-[#17458f] bg-[#2a60b4] text-[#f2f6fc]">Soubor</button>
    <button className="z-10 -mb-px ml-1 h-[27px] border border-b-0 border-[#bcc1c9] bg-[#fcfcfc] px-2">Tvar</button>
    <nav className="flex gap-px pt-0.5">
      {tabs.map((tab) => (
        <button key={tab} className="px-[10px]">
          {tab}
        </button>
      ))}
    </nav>
    <div className="ml-auto flex h-6 items-center pr-1">
      <button aria-label="Sbalit pás karet">
        <svg viewBox="0 0 13 12" className="w-[13px]" fill="none" stroke="#55585c" strokeWidth="1.200" aria-hidden="true">
          <path d="M1 6l5.500-4.500L12 6l-1 1-4.500-3L2 7zM1 10l5.500-4L12 10l-1 1H2z" />
        </svg>
      </button>
      <label className="ml-[15px] flex h-6 w-[182px] items-center border border-[#b6bbc3] bg-white pl-[2px] pr-1.5">
        <input aria-label="Najít příkaz" placeholder="Najít příkaz" className="w-full min-w-0 outline-none placeholder:text-[#8e8e8e]" />
        <svg viewBox="0 0 14 14" className="w-[15px] shrink-0" fill="none" stroke="#6e7276" aria-hidden="true">
          <circle cx="6.500" cy="6.500" r="5.500" />
          <path d="M10.500 10.500l3 3" stroke="#4a9cc0" />
        </svg>
      </label>
      <button aria-label="Nastavení" className="ml-3">
        <Settings size={20} color="#a2a5a8" />
      </button>
      <button aria-label="Nápověda" className="ml-[14px]">
        <svg viewBox="0 0 20 20" className="size-5" aria-hidden="true">
          <circle cx="10" cy="10" r="9.300" fill="#d9dfe8" stroke="#8f97a5" />
          <circle cx="10" cy="10" r="7.500" fill="#1e4fb0" />
          <text x="10" y="15" fontSize="14" fontWeight="700" textAnchor="middle" fill="#fff">?</text>
        </svg>
      </button>
      <Caret className="ml-1.5 w-[10px] text-black" />
      <button aria-label="Minimalizovat dokument" className="ml-[14px] h-0.5 w-3 bg-[#333]" />
      <button aria-label="Obnovit dokument" className="ml-[6px]">
        <RestoreIcon />
      </button>
    </div>
  </div>
);

const RibbonButton = ({ item }: { item: RibbonItem }) => (
  <div className={`flex h-7 w-fit border ${item.box ?? "border-transparent"}`}>
    <button aria-label={item.text || item.icon} className={`flex items-center gap-1 whitespace-pre pl-[3px] ${item.main ?? ""} ${item.text ? "pr-1" : ""}`}>
      <Icon name={item.icon} />
      {item.text}
    </button>
    {item.menu && (
      <button aria-label={`${item.text} nabídka`} className={`flex w-5 items-center justify-center border-l pb-0.5 ${item.arrow ?? "border-transparent"}`}>
        <Caret />
      </button>
    )}
  </div>
);

const Ribbon = () => (
  <section className="flex shrink-0 overflow-hidden border-y border-[#bcc1c9] bg-[#fcfcfc] pt-1">
    {groups.map((group) => (
      <div key={group.label} className={`relative shrink-0 border-r border-[#cfd3d8] ${group.width}`}>
        <div className="flex h-[84px]">
          {group.columns.map((column, index) => (
            <div key={index} className={`shrink-0 ${column.width}`}>
              {column.items.map((item) => (
                <RibbonButton key={item.icon} item={item} />
              ))}
            </div>
          ))}
        </div>
        <div className="flex h-[27px] items-center justify-center whitespace-nowrap text-[#808080]">{group.label}</div>
        {group.launcher && (
          <button aria-label="Další možnosti" className="absolute bottom-2 right-1">
            <svg viewBox="0 0 10 10" className="w-[10px]" aria-hidden="true">
              <path d="M.5 8V.5H8M3 3l3 3" fill="none" stroke="#555b66" />
              <path d="M4 9h5V4z" fill="#555b66" stroke="#555b66" />
            </svg>
          </button>
        )}
      </div>
    ))}
  </section>
);

const FilterBar = () => (
  <div className="flex h-9 shrink-0 items-center overflow-hidden pl-1 pt-0.5">
    <div className="mr-[5px] h-6 border-l-[3px] border-dotted border-[#6b6e72]" />
    <IconButton name="pick" className="w-[27px] border border-[#c9a13c] bg-[#ffe07a]" />
    <IconButton name="plus" />
    <IconButton name="minus" />
    <IconButton name="boxPlus" />
    <button aria-label="Možnosti výběru" className="flex w-[14px] justify-center text-black">
      <Caret />
    </button>
    <IconButton name="hexagon" className="ml-1 w-7" />
    <Separator />
    <IconButton name="colorFilter" />
    <Combo label="Filtr" value="Vše" className="mx-px h-[26px] w-[168px]" />
    <IconButton name="partFilter" className="w-[27px] border border-[#c9a13c] bg-[#ffe07a]" />
    <Combo label="Rozsah" value="Pouze díl" className="mx-px h-[26px] w-[168px]" disabled />
    <IconButton name="linkRef" />
    <IconButton name="globeRef" />
    <Separator />
    {filterIcons.map((name) => (
      <IconButton key={name} name={name} />
    ))}
    <Separator />
    <IconButton name="circleCursor" />
    <IconButton name="path" />
    <IconButton name="square" />
    <Combo label="Režim výběru" value="Jeden výběr" className="mx-px h-[26px] w-[168px]" />
    {snapIcons.map((name) => (
      <IconButton key={name} name={name} />
    ))}
  </div>
);

const Chevron = ({ open }: { open: boolean }) => (
  <svg viewBox="0 0 12 12" className="w-3 shrink-0" fill="none" strokeWidth="2.500" aria-hidden="true">
    {open ? <path d="M1 3.500l5 5 5-5" stroke="#222" /> : <path d="M3.500 1l5 5-5 5" stroke="#a0a0a0" />}
  </svg>
);

const TreeCheck = ({ icon, text }: { icon: string; text: string }) => (
  <label className="flex items-center pl-[58px]">
    <span className="relative size-4">
      <input type="checkbox" defaultChecked className="peer block size-4 appearance-none border border-[#1a1a1a] bg-white" />
      <svg viewBox="0 0 16 16" className="pointer-events-none absolute inset-0 hidden peer-checked:block" aria-hidden="true">
        <path d="M3 8l4 4 6-9" fill="none" stroke="#0ca313" strokeWidth="2" />
      </svg>
    </span>
    <Icon name={icon} className="ml-2 mr-1 size-5" />
    {text}
  </label>
);

const TreeRow = ({ children, odd }: { children: React.ReactNode; odd?: boolean }) => (
  <tr className={`h-[23px] ${odd ? "bg-[#f5f5f5]" : "bg-white"}`}>
    <td className="border-b border-r border-b-[#f0f0f0] border-r-[#c8cbd3] p-0">{children}</td>
    <td className="p-0" />
  </tr>
);

const sideIcons = [
  <svg key="tree" viewBox="0 0 28 30" className="w-7" aria-hidden="true">
    <path d="M1 5l8-4 8 3v9l-8 4-8-4z" fill="#2c9fca" />
    <path d="M1 5l8-4 8 3-8 4z" fill="#0f7097" />
    <path d="M1 5l8 3v9l-8-4z" fill="#9fe0f3" />
    <path d="M19 13h8M9 18v12M9 24h8" stroke="#8496a5" strokeWidth="1.400" />
    <path d="M19.500 20.500h7v6h-7z" fill="#fff" stroke="#4f7f9b" strokeWidth="1.500" />
  </svg>,
  <svg key="part" viewBox="0 0 28 30" className="w-7" aria-hidden="true">
    <path d="M.5.5h27v29H.5z" fill="#e4f5fb" stroke="#3d9dc0" />
    <path d="M0 0h28v6H0z" fill="#2aa0ca" />
    <path d="M5 12l9-3 9 3v11l-9 4-9-4z" fill="#ffcf2f" stroke="#c3740f" strokeLinejoin="round" />
    <path d="M5 12l9 4 9-4M14 16v11" fill="none" stroke="#c3740f" />
    <path d="M14 16l9-4v11l-9 4z" fill="#f5ab1a" />
  </svg>,
  <svg key="visual" viewBox="0 0 30 30" className="w-[30px]" aria-hidden="true">
    <path d="M0 0h30v30H0z" fill="#d2edf7" stroke="#6fa5ba" />
    <path d="M0 14C4 4 9 3 14 11s8 8 16 2v17H0z" fill="#2596bf" />
    <path d="M0 14C4 4 9 3 14 11s4 8 6 9L0 22z" fill="#9bd8ea" />
    <path d="M0 10C6 3 10 5 14 12s9 7 16 2" fill="none" stroke="#5d7f90" />
    <circle cx="21" cy="7" r="5.500" fill="#ffbf23" stroke="#d88e10" />
    <path d="M0 20h10v-4l7 6-7 6v-4H0z" fill="#ff8c2b" stroke="#c2560c" />
  </svg>,
  <svg key="people" viewBox="0 0 30 26" className="w-[30px]" aria-hidden="true">
    <path d="M20 1c6 0 7 6 3 12l1 4 6 5H14V5c1-3 3-4 6-4z" fill="#ffbd22" stroke="#b97b0b" strokeWidth=".8" />
    <path d="M13 3c7 0 7 8 3 13v2l9 4v3H0v-3l8-4v-2C5 11 6 3 13 3z" fill="#2492bd" stroke="#0d5d7d" strokeWidth=".8" />
    <path d="M10 18l3 7 3-7z" fill="#bfe5f2" />
  </svg>,
];

const ManagerPanel = () => (
  <aside className="flex w-[449px] shrink-0 flex-col">
    <div className="flex h-[26px] shrink-0 items-center gap-[10px] pl-[5px] pr-[11px]">
      <h2 className="flex-1 text-[#3c3c3c]">Správce</h2>
      <button aria-label="Ukotvit"><PinIcon /></button>
      <button aria-label="Zavřít"><CloseIcon /></button>
    </div>
    <div className="flex min-h-0 flex-1 border-t border-[#bcc1c9] pr-[3px]">
      <nav className="flex w-10 shrink-0 flex-col">
        {sideIcons.map((icon, index) => (
          <button
            key={index}
            aria-label={`Správce ${index + 1}`}
            className={`ml-px flex items-center justify-center ${index === 0 ? "h-[57px] border border-r-0 border-t-0 border-[#bcc1c9] bg-[#fcfcfc]" : "h-[60px]"}`}
          >
            {icon}
          </button>
        ))}
      </nav>
      <div className="flex min-w-0 flex-1 flex-col border-x-2 border-[#b9bfc8] bg-white">
        <div className="flex h-[31px] shrink-0 border-b-2 border-[#b9bfc8]">
          <Combo label="Zobrazení" value="Show Most" className="w-[186px] border-r border-[#b9bfc8] [&>select]:border-0" />
          <input aria-label="Zadejte pro hledání" placeholder="Zadejte pro hledání" className="min-w-0 flex-1 border-l border-[#b9bfc8] pl-0.5 outline-none placeholder:text-[#8e8e8e]" />
          <button aria-label="Filtr" className="flex w-[30px] items-center justify-center border-l-2 border-[#b9bfc8]">
            <svg viewBox="0 0 20 20" className="size-5" aria-hidden="true">
              <path d="M0 1h20l-7 8v10H8V9z" fill="#1ba8d4" />
            </svg>
          </button>
        </div>
        <div className="min-h-0 flex-1 overflow-hidden bg-[repeating-linear-gradient(to_bottom,#f5f5f5_0_23px,#ffffff_23px_46px)] bg-[position:0_7px]">
          <table className="w-full table-fixed border-separate border-spacing-0 text-left">
            <thead>
              <tr className="h-[30px] bg-[#eff3f7]">
                <th className="w-[288px] border-b border-r border-[#c3c8cf] pb-0 pl-[5px] pr-0 pt-0.5 font-normal text-[#3a3a3a]">Záznam vlastnosti</th>
                <th className="border-b border-[#c3c8cf] p-0" />
              </tr>
            </thead>
            <tbody className="leading-[22px]">
              <TreeRow>
                <div className="flex items-center pl-[3px] text-black">
                  <Chevron open />
                  <Icon name="tree" className="ml-2 mr-[5px] size-[18px]" />
                  test_3d_to_2d
                </div>
              </TreeRow>
              <TreeRow odd>
                <div className="flex items-center pl-5">
                  <Chevron open={false} />
                  <Icon name="wireFolder" className="ml-[9px] mr-[5px] size-[18px]" />
                  Drátový model(22)
                </div>
              </TreeRow>
              <TreeRow>
                <div className="flex items-center pl-5">
                  <Chevron open />
                  <Icon name="folder" className="ml-[9px] mr-[5px] size-[18px]" />
                  Historie
                </div>
              </TreeRow>
              <TreeRow odd>
                <TreeCheck icon="csys" text="Výchozí CSYS" />
              </TreeRow>
              <TreeRow>
                <TreeCheck icon="wires" text="Dráty1" />
              </TreeRow>
              <TreeRow odd>
                <div className="flex items-center whitespace-nowrap pl-[58px] text-[#ed1c24]">
                  <Icon name="leftArrow" />
                  <span className="mx-2">-----</span>
                  MODEL Z...VIT ZDE
                  <span className="mx-2">-----</span>
                </div>
              </TreeRow>
            </tbody>
          </table>
        </div>
      </div>
    </div>
  </aside>
);

const Drawing = () => (
  <svg viewBox="450 240 1056 677" className="absolute inset-0 h-full w-full" fill="none">
    {/* coordinate plane */}
    <path d="M963 530h71v72h-71z" fill="#c9a56a" fillOpacity=".15" />
    <path d="M963 530.500h71.500v72" stroke="#a86800" strokeOpacity=".65" strokeWidth="1.500" />

    {/* sheet outline and holes */}
    <g stroke="#000" strokeWidth="2">
      <rect x="650" y="446" width="625" height="313" rx="9" />
      {[728, 884, 1040, 1197].map((cx) => (
        <circle key={cx} cx={cx} cy="519" r="16" strokeWidth="1.800" />
      ))}
      <circle cx="962" cy="711.500" r="31.500" strokeWidth="1.800" />
    </g>

    {/* bend lines */}
    <path d="M651 602.500h624" stroke="#707070" strokeWidth="1.400" strokeDasharray="28 4" strokeDashoffset="12" />
    <path d="M651 621h624" stroke="#7a7a7a" strokeWidth="2" strokeDasharray="20 1 7 4" strokeDashoffset="12" />
    <path d="M651 611.500h624" stroke="#00ffff" strokeDasharray="9 2 2 3" strokeDashoffset="6" />

    {/* dimensions */}
    <g stroke="#6666f5" strokeWidth="1.500">
      <path d="M650 366v80M1275 366v80M652 374h287M986 374h287" />
      <path d="M570 446h80M578 448v135M578 622v134" />
    </g>
    <path d="M650 454v288" stroke="#0000a8" strokeWidth="1.500" />
    <path d="M570 758.500h688" stroke="#0000f0" strokeWidth="1.200" />
    <g fill="#0000ff">
      <path d="M652 374l9-3v6zM1273 374l-9-3v6zM578 448l-3 9h6zM578 756l-3-9h6z" />
      <text x="962" y="381" fontSize="20" textAnchor="middle">200</text>
      <text x="579" y="610" fontSize="20" textAnchor="middle">100</text>
    </g>

    {/* bend leader */}
    <path d="M977 626l183 185" stroke="#2222f5" strokeWidth="1.200" />
    <path d="M963 612l18 11-4 3-3 5z" fill="#0000ff" />
    <text transform="translate(1066 703) rotate(45)" fontSize="19" fontWeight="700" fill="#0000ff" className="font-['Liberation_Sans',sans-serif]">
      Nahoru 90.00 R3.00
    </text>

    {/* part axes */}
    <path d="M962.500 602V474M962 602.500h129" stroke="#a86800" strokeWidth="1.300" />
    <path d="M962.500 459l3 15h-6zM1104 602.500l-13-3v6z" fill="#c07a08" stroke="#7d4d00" strokeWidth=".6" />
    <circle cx="962" cy="602" r="3.500" fill="#4a3208" />
    <g fill="#a86800" fontSize="20" textAnchor="middle">
      <text x="963" y="452">Y</text>
      <text x="1120" y="610">X</text>
      <text x="962" y="610">Z</text>
    </g>

    {/* view triad */}
    <path d="M537 881V828" stroke="#1fd01f" strokeWidth="2" />
    <path d="M537 815l3 13h-6z" fill="#118a11" />
    <path d="M538 882h53" stroke="#ff0000" strokeWidth="2" />
    <path d="M604 882l-13-3v6z" fill="#d80000" />
    <g fontSize="20" textAnchor="middle">
      <text x="538" y="813" fill="#28d028">Y</text>
      <text x="613" y="889" fill="#ff1010">X</text>
      <text x="538" y="889" fill="#0000ff">Z</text>
    </g>
    <circle cx="537" cy="882" r="4" fill="#000080" />
  </svg>
);

const DocumentArea = () => (
  <main className="flex min-w-0 flex-1 flex-col">
    <div className="flex h-[26px] shrink-0 items-center border-b border-[#bcc1c9] pr-2">
      <div className="-mt-px -mb-px ml-px flex h-[27px] w-[222px] items-center justify-center gap-[7px] border border-b-0 border-[#bcc1c9] bg-white pl-[18px]">
        * test_3d_to_2d.Z3PRT
        <button aria-label="Zavřít dokument">
          <svg viewBox="0 0 12 12" className="w-3" aria-hidden="true">
            <path d="M1 1l10 10M11 1L1 11" stroke="#7a6a3e" strokeWidth="2.500" />
          </svg>
        </button>
      </div>
      <button aria-label="Nový dokument" className="ml-2">
        <svg viewBox="0 0 13 13" className="w-[13px]" aria-hidden="true">
          <path d="M6.500 0v13M0 6.500h13" stroke="#a39f9b" strokeWidth="2.500" />
        </svg>
      </button>
      <button aria-label="Seznam dokumentů" className="ml-auto">
        <svg viewBox="0 0 11 11" className="w-[11px]" aria-hidden="true">
          <path d="M0 1h11M0 5h11L5.500 10z" stroke="#96928f" fill="#96928f" />
        </svg>
      </button>
    </div>
    <div className="relative flex-1 overflow-hidden border-x border-[#bcc1c9] bg-linear-to-b from-white to-[#a9a9a9]">
      <Drawing />
      <div className="relative flex h-[31px] items-center justify-center">
        {viewTools.map(([name, menu]) => (
          <React.Fragment key={name}>
            <IconButton name={name} />
            {menu && (
              <button aria-label={`${name} nabídka`} className="mr-2 w-3 text-[#222]">
                <Caret />
              </button>
            )}
          </React.Fragment>
        ))}
        <div className="relative">
          <Combo label="Vrstva" value="0" className="h-[26px] w-[144px] [&>select]:pl-[46px]" />
          <div className="pointer-events-none absolute left-2 top-1.5 flex">
            <Icon name="bulb" className="size-[15px]" />
            <Icon name="sun" className="ml-1 size-[14px]" />
          </div>
        </div>
      </div>
      <p className="relative -mt-[3px] whitespace-pre-line pl-5 leading-5 text-[#111]">
        {"Podržet <F2> pro dynamické prohlížení.\n<F8> nebo <Shift-roll> pro nalezení dalšího platného nastavení filtru."}
      </p>
    </div>
  </main>
);

const OutputPanel = () => (
  <aside className="flex w-[390px] shrink-0 flex-col overflow-hidden pl-0.5">
    <div className="flex h-[26px] shrink-0 items-center pl-1">
      <h2 className="flex-1 text-[#3c3c3c]">Výstup</h2>
      <button aria-label="Zastavit" className="size-2 bg-[#1c1c1c]" />
      <button aria-label="Ukotvit" className="ml-[13px]"><PinIcon /></button>
      <button aria-label="Zavřít" className="-mr-3 ml-[9px]"><CloseIcon /></button>
    </div>
    <div className="min-h-0 flex-1 overflow-hidden border-l border-t border-[#b9bfc8] bg-white pl-1 pt-[5px] leading-5">
      {output.map((line) => (
        <p key={line.text} className={`whitespace-nowrap ${line.note ? "text-[#006a00]" : "text-black"}`}>
          {line.text}
        </p>
      ))}
    </div>
  </aside>
);

export default function App() {
  return (
    <div className="flex h-screen flex-col overflow-hidden bg-[#e8eaec] font-['Open_Sans','Noto_Sans',sans-serif] text-sm text-[#1e1e1e]">
      <TitleBar />
      <TabBar />
      <Ribbon />
      <FilterBar />
      <div className="flex min-h-0 flex-1">
        <ManagerPanel />
        <DocumentArea />
        <OutputPanel />
      </div>
    </div>
  );
}
